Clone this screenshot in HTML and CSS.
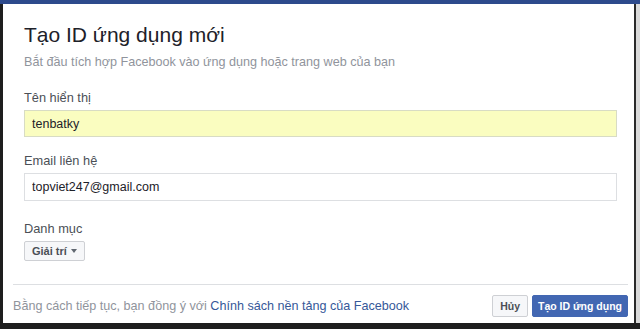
FILE: index.html
```html
<!DOCTYPE html>
<html lang="vi">
<head>
    <meta charset="UTF-8">
    <meta name="viewport" content="width=device-width, initial-scale=1.0">
    <title>Tạo ID ứng dụng mới</title>
    <link rel="stylesheet" href="styles.css">
</head>
<body>

    <div class="topbar"></div>

    <div class="frame">
        <div class="dialog">
            <div class="dialog-body">
                <h2 class="title">Tạo ID ứng dụng mới</h2>
                <p class="subtitle">Bắt đầu tích hợp Facebook vào ứng dụng hoặc trang web của bạn</p>

                <div class="form-group">
                    <label for="name">Tên hiển thị</label>
                    <input type="text" id="name" class="autofill" value="tenbatky">
                </div>

                <div class="form-group">
                    <label for="email">Email liên hệ</label>
                    <input type="text" id="email" value="topviet247@gmail.com">
                </div>

                <div class="form-group">
                    <label>Danh mục</label>
                    <button type="button" class="dropdown">Giải trí <span class="caret"></span></button>
                </div>
            </div>

            <div class="dialog-footer">
                <span class="terms">Bằng cách tiếp tục, bạn đồng ý với <a href="#">Chính sách nền tảng của Facebook</a></span>
                <div class="actions">
                    <button type="button" class="btn">Hủy</button>
                    <button type="button" class="btn btn-primary">Tạo ID ứng dụng</button>
                </div>
            </div>
        </div>
        <div class="gutter"></div>
    </div>

</body>
</html>
```

FILE: styles.css
```css
body {
    font-family: "Liberation Sans", Arial, sans-serif;
    background: #1e1e1e;
    margin: 0;
    padding: 0;
}

.topbar {
    height: 4px;
    background: #2d4a8c;
}

.frame {
    display: flex;
    height: 319px;
    padding-left: 3px;
}

.dialog {
    width: 631px;
    background: #fff;
    border-right: 2px solid #2a2a2a;
    display: flex;
    flex-direction: column;
}

.gutter {
    flex: 1;
    background: #d9d9d9;
}

.dialog-body {
    flex: 1;
    padding: 18px 17px 0 21px;
}

.title {
    margin: 0;
    font-size: 21px;
    line-height: 26px;
    font-weight: normal;
    color: #1d2129;
}

.subtitle {
    margin: 6px 0 0;
    font-size: 12.6px;
    line-height: 16px;
    color: #90949c;
}

.form-group {
    display: flex;
    flex-direction: column;
    align-items: flex-start;
    margin-top: 20px;
}

.form-group + .form-group {
    margin-top: 16px;
}

.form-group:last-child {
    margin-top: 20px;
}

label {
    font-size: 12.8px;
    line-height: 16px;
    color: #4b4f56;
    margin-bottom: 4px;
}

input {
    width: 100%;
    height: 28px;
    box-sizing: border-box;
    border: 1px solid #dddfe2;
    padding: 0 7px;
    font-family: inherit;
    font-size: 12.5px;
    color: #1d2129;
    background: #fff;
    outline: none;
}

input.autofill {
    height: 27px;
    background: #fafdc0;
    border-color: #d8dcc4;
}

.dropdown {
    height: 20px;
    padding: 0 7px;
    border: 1px solid #ced0d4;
    border-radius: 2px;
    background: #f6f7f9;
    color: #4b4f56;
    font-family: inherit;
    font-size: 11px;
    font-weight: bold;
    display: flex;
    align-items: center;
    gap: 4px;
}

.caret {
    width: 0;
    height: 0;
    border-left: 3.5px solid transparent;
    border-right: 3.5px solid transparent;
    border-top: 4px solid #606770;
}

.dialog-footer {
    margin: 0 6px 0 10px;
    border-top: 1px solid #dddfe2;
    height: 39px;
    display: flex;
    align-items: center;
    justify-content: space-between;
    padding-top: 3px;
    box-sizing: border-box;
}

.terms {
    font-size: 12.6px;
    color: #90949c;
}

.terms a {
    color: #365899;
    text-decoration: none;
}

.actions {
    display: flex;
    gap: 4px;
}

.btn {
    height: 22px;
    padding: 0 7px;
    border: 1px solid #ced0d4;
    border-radius: 2px;
    background: #f6f7f9;
    color: #4b4f56;
    font-family: inherit;
    font-size: 10.5px;
    font-weight: bold;
}

.btn-primary {
    padding: 0 5px;
    background: #4267b2;
    border-color: #4267b2;
    color: #fff;
}
```
